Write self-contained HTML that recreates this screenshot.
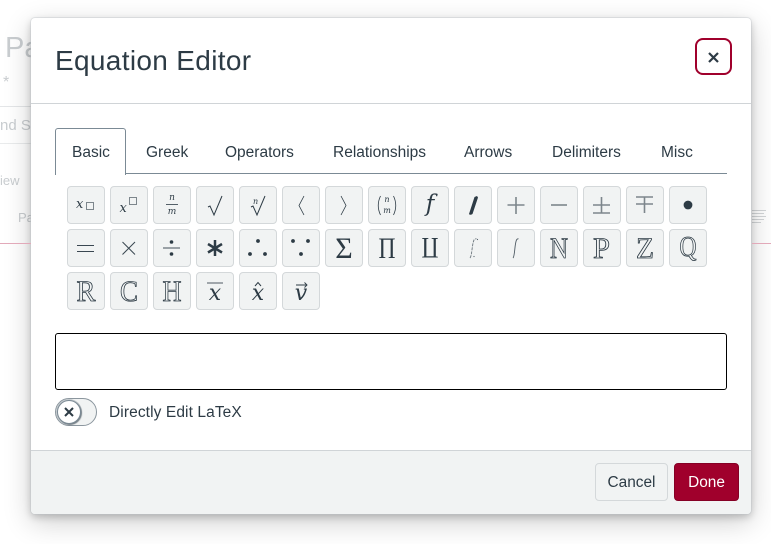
<!DOCTYPE html>
<html><head><meta charset="utf-8">
<style>
html,body{margin:0;padding:0;background:#fff}
body{width:771px;height:544px;overflow:hidden;position:relative;font-family:"Liberation Sans",sans-serif;color:#2d3b45}
.a{position:absolute;white-space:nowrap}
.bg{color:#c9cdd0}
#m{position:absolute;left:31px;top:18px;width:720px;height:496px;background:#fff;border-radius:4px;box-shadow:0 0 0 1px rgba(190,195,200,.35),0 3px 8px rgba(0,0,0,.2),0 8px 28px rgba(0,0,0,.2)}
.tab{position:absolute;top:144px;font-size:15.5px;line-height:18px;white-space:nowrap}
.b{position:absolute;width:36px;height:36px;background:#f1f3f3;border:1px solid #d4d8da;border-radius:4px}
.b svg{position:absolute;left:-1px;top:-1px;width:38px;height:38px;overflow:visible}
text{fill:#2d3b45}
.s{font-family:"DejaVu Serif",serif;font-style:italic}
.o{font-family:"Liberation Serif",serif;fill:#f1f3f3;stroke:#2d3b45;stroke-width:.85}
.r{font-family:"Liberation Serif",serif}
line,path.l{stroke:#2d3b45;fill:none}
</style></head><body>
<div class="a bg" style="left:5px;top:30px;font-size:29px;line-height:36px">Pa</div>
<div class="a bg" style="left:3px;top:74px;font-size:16px">*</div>
<div class="a" style="left:0;top:106px;width:31px;height:1px;background:#e4e6e8"></div>
<div class="a bg" style="left:0;top:117px;font-size:15px">nd S</div>
<div class="a" style="left:0;top:143px;width:31px;height:1px;background:#e9ebec"></div>
<div class="a bg" style="left:0;top:173px;font-size:13px">iew</div>
<div class="a bg" style="left:18px;top:210px;font-size:13px">Pa</div>
<svg class="a" style="left:752px;top:209px" width="16" height="16"><path d="M0 1.500H14M0 4.500H12M0 7.500H14M0 10.500H12M0 13.500H9" stroke="#d3d6d8" fill="none"/></svg>

<div id="m"></div>
<div class="a" style="left:0;top:243px;width:31px;height:1px;background:#e2a9b9"></div>
<div class="a" style="left:752px;top:243px;width:19px;height:1px;background:#e2a9b9"></div>
<div class="a" style="left:31px;top:103px;width:720px;height:1px;background:#d0d4d7"></div>
<div class="a" style="left:55px;top:43px;font-size:28px;line-height:36px;letter-spacing:.33px">Equation Editor</div>
<div class="a" style="left:695px;top:38px;width:33px;height:33px;border:2px solid #a0002c;border-radius:8px"></div>
<svg class="a" style="left:695px;top:38px" width="37" height="37"><path d="M14 15L23 24M23 15L14 24" stroke="#2d3b45" stroke-width="2.200"/></svg>

<div class="a" style="left:55px;top:173px;width:672px;height:1px;background:#7b8a95"></div>
<div class="a" style="left:55px;top:128px;width:69px;height:46px;border:1px solid #7b8a95;border-bottom:0;border-radius:3px 3px 0 0;background:#fff"></div>
<div class="tab" style="left:72px">Basic</div>
<div class="tab" style="left:146px">Greek</div>
<div class="tab" style="left:225px">Operators</div>
<div class="tab" style="left:333px">Relationships</div>
<div class="tab" style="left:464px">Arrows</div>
<div class="tab" style="left:552px">Delimiters</div>
<div class="tab" style="left:661px">Misc</div>

<!-- row 1 -->
<div class="b" style="left:67px;top:186px"><svg><text class="s" x="9" y="22" font-size="13">x</text><rect x="19.500" y="16.500" width="7" height="7" fill="none" stroke="#7d868c"/></svg></div>
<div class="b" style="left:110px;top:186px"><svg><text class="s" x="9.500" y="26" font-size="13">x</text><rect x="19.500" y="11.500" width="7" height="7" fill="none" stroke="#7d868c"/></svg></div>
<div class="b" style="left:153px;top:186px"><svg><text class="s" x="19" y="14" font-size="9" text-anchor="middle">n</text><line x1="13" y1="18.500" x2="25" y2="18.500" stroke-width=".8"/><text class="s" x="19" y="28" font-size="9" text-anchor="middle">m</text></svg></div>
<div class="b" style="left:196px;top:186px"><svg><path class="l" stroke-width="1" d="M12 21L14 20L18 29L26 10"/></svg></div>
<div class="b" style="left:239px;top:186px"><svg><path class="l" stroke-width="1" d="M12 21L14 20L18 29L26 10"/><text class="s" x="14" y="18" font-size="8">n</text></svg></div>
<div class="b" style="left:282px;top:186px"><svg><path class="l" stroke-width=".8" d="M22 10L17 19.500L22 29"/></svg></div>
<div class="b" style="left:325px;top:186px"><svg><path class="l" stroke-width=".8" d="M16 10L21 19.500L16 29"/></svg></div>
<div class="b" style="left:368px;top:186px"><svg><path class="l" stroke-width=".8" d="M12.500 10Q8 19.500 12.500 29M25.500 10Q30 19.500 25.500 29"/><text class="s" x="19" y="16" font-size="8" text-anchor="middle">n</text><text class="s" x="19" y="27" font-size="8" text-anchor="middle">m</text></svg></div>
<div class="b" style="left:411px;top:186px"><svg><text class="s" x="19" y="25" font-size="23" text-anchor="middle">f</text></svg></div>
<div class="b" style="left:454px;top:186px"><svg><path fill="#2d3b45" d="M20.500 11L23 10L24 11.500L18.500 28Q16 29.500 15 28Z"/></svg></div>
<div class="b" style="left:497px;top:186px"><svg><path d="M10.500 19H27.500M19 11V28" stroke="#7d868c" stroke-width="1.600" fill="none"/></svg></div>
<div class="b" style="left:540px;top:186px"><svg><path d="M11 19H27" stroke="#7d868c" stroke-width="1.600" fill="none"/></svg></div>
<div class="b" style="left:583px;top:186px"><svg><path d="M10 19H27M18.500 11V27M10 27H27" stroke="#7d868c" stroke-width="1.600" fill="none"/></svg></div>
<div class="b" style="left:626px;top:186px"><svg><path d="M10 11H27M18.500 11V27M10 18H27" stroke="#7d868c" stroke-width="1.600" fill="none"/></svg></div>
<div class="b" style="left:669px;top:186px"><svg><circle cx="19" cy="19" r="4.400" fill="#2d3b45"/></svg></div>

<!-- row 2 -->
<div class="b" style="left:67px;top:229px"><svg><path d="M10 16.500H27M10 22.500H27" stroke="#3a4751" fill="none"/></svg></div>
<div class="b" style="left:110px;top:229px"><svg><path d="M12.500 13L25 25.500M25 13L12.500 25.500" stroke="#3a4751" fill="none"/></svg></div>
<div class="b" style="left:153px;top:229px"><svg><path d="M10 19H27" stroke="#7d868c" stroke-width="1.400"/><circle cx="18.500" cy="13" r="1.800" fill="#2d3b45"/><circle cx="18.500" cy="25" r="1.800" fill="#2d3b45"/></svg></div>
<div class="b" style="left:196px;top:229px"><svg><path d="M19 11V27M12 15L26 23.500M26 15L12 23.500" stroke="#2d3b45" stroke-width="2.500" fill="none"/></svg></div>
<div class="b" style="left:239px;top:229px"><svg><circle cx="19" cy="12" r="1.900" fill="#2d3b45"/><circle cx="11" cy="25" r="1.900" fill="#2d3b45"/><circle cx="26" cy="25" r="1.900" fill="#2d3b45"/></svg></div>
<div class="b" style="left:282px;top:229px"><svg><circle cx="11" cy="12" r="1.900" fill="#2d3b45"/><circle cx="26" cy="12" r="1.900" fill="#2d3b45"/><circle cx="19" cy="25" r="1.900" fill="#2d3b45"/></svg></div>
<div class="b" style="left:325px;top:229px"><svg><text class="r" x="19" y="29" font-size="30" text-anchor="middle">Σ</text></svg></div>
<div class="b" style="left:368px;top:229px"><svg><text class="r" x="10.500" y="29" font-size="30" textLength="17" lengthAdjust="spacingAndGlyphs">Π</text></svg></div>
<div class="b" style="left:411px;top:229px"><svg><text class="r" x="10.500" y="29" font-size="30" textLength="17" lengthAdjust="spacingAndGlyphs" transform="matrix(1 0 0 -1 0 38)">Π</text></svg></div>
<div class="b" style="left:454px;top:229px"><svg><path d="M16 29C18 27 18 15 20 11C20.500 10 22 9.500 22.500 10" stroke="#6c767d" stroke-width=".9" fill="none" stroke-dasharray="3 1"/><circle cx="23.500" cy="10.500" r=".6" fill="#55616a"/><circle cx="20" cy="27.500" r=".6" fill="#55616a"/></svg></div>
<div class="b" style="left:497px;top:229px"><svg><path d="M16 29C18 27 17.500 15 19.500 11C20 10 21 9.500 21.500 10" stroke="#4f5b64" stroke-width=".9" fill="none"/></svg></div>
<div class="b" style="left:540px;top:229px"><svg><text class="o" x="10" y="29" font-size="30" textLength="18" lengthAdjust="spacingAndGlyphs">N</text></svg></div>
<div class="b" style="left:583px;top:229px"><svg><text class="o" x="10" y="29" font-size="30" textLength="17" lengthAdjust="spacingAndGlyphs">P</text></svg></div>
<div class="b" style="left:626px;top:229px"><svg><text class="o" x="10" y="29" font-size="30" textLength="18" lengthAdjust="spacingAndGlyphs">Z</text></svg></div>
<div class="b" style="left:669px;top:229px"><svg><text class="o" x="10.500" y="27" font-size="28" textLength="17" lengthAdjust="spacingAndGlyphs">Q</text></svg></div>

<!-- row 3 -->
<div class="b" style="left:67px;top:272px"><svg><text class="o" x="9.500" y="29" font-size="30" textLength="19" lengthAdjust="spacingAndGlyphs">R</text></svg></div>
<div class="b" style="left:110px;top:272px"><svg><text class="o" x="10" y="29" font-size="30" textLength="18" lengthAdjust="spacingAndGlyphs">C</text></svg></div>
<div class="b" style="left:153px;top:272px"><svg><text class="o" x="9.500" y="29" font-size="30" textLength="19" lengthAdjust="spacingAndGlyphs">H</text></svg></div>
<div class="b" style="left:196px;top:272px"><svg><path d="M11 11H27" stroke="#7d868c" stroke-width="1.400"/><text class="s" x="19" y="28" font-size="22" text-anchor="middle">x</text></svg></div>
<div class="b" style="left:239px;top:272px"><svg><path d="M16 14L19 10.500L22 14" stroke="#2d3b45" fill="none"/><text class="s" x="19" y="28" font-size="22" text-anchor="middle">x</text></svg></div>
<div class="b" style="left:282px;top:272px"><svg><path d="M14 13H25M22.500 10.500L25 13L22.500 15.500" stroke="#2d3b45" stroke-width=".9" fill="none"/><text class="s" x="19" y="28" font-size="22" text-anchor="middle">v</text></svg></div>

<div class="a" style="left:55px;top:333px;width:670px;height:55px;border:1px solid #000;border-radius:3px"></div>

<div class="a" style="left:55px;top:398px;width:40px;height:26px;border:1px solid #8b969e;border-radius:14px;background:#f1f3f3"></div>
<div class="a" style="left:57px;top:400px;width:22px;height:22px;border:1px solid #7b8a95;border-radius:50%;background:#fff;box-shadow:1px 1px 1px rgba(45,59,69,.5),0 0 0 1px #c2c8cc"></div>
<svg class="a" style="left:56px;top:399px" width="26" height="26"><path d="M9 9L17 17M17 9L9 17" stroke="#2d3b45" stroke-width="2"/></svg>
<div class="a" style="left:109px;top:404px;font-size:15.5px;line-height:18px;letter-spacing:.1px">Directly Edit LaTeX</div>

<div class="a" style="left:31px;top:450px;width:720px;height:64px;background:#f1f3f3;border-top:1px solid #d0d4d7;box-sizing:border-box;border-radius:0 0 4px 4px"></div>
<div class="a" style="left:595px;top:463px;width:71px;height:36px;background:#f1f3f3;border:1px solid #d4d8da;border-radius:4px;font-size:15.4px;line-height:38px;text-align:center">Cancel</div>
<div class="a" style="left:674px;top:463px;width:63px;height:36px;background:#a0002c;border:1px solid #850025;border-radius:4px;font-size:15.4px;line-height:38px;text-align:center;color:#fff">Done</div>
</body></html>
